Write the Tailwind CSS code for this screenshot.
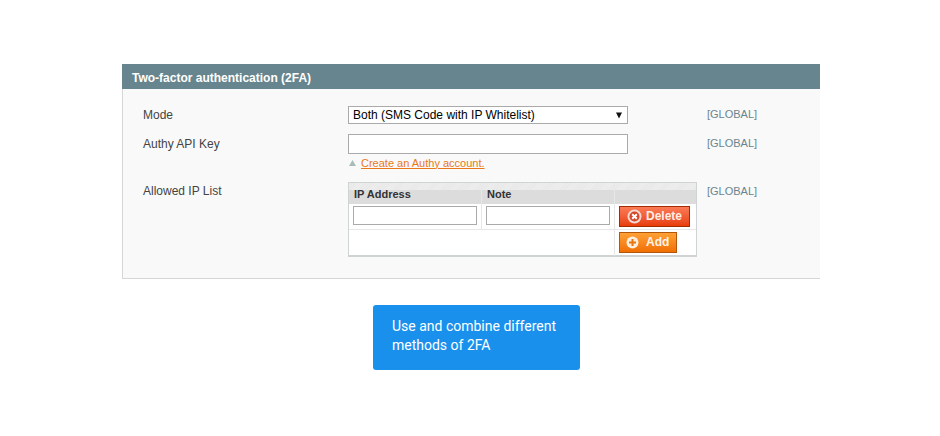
<!DOCTYPE html>
<html lang="en">

<head>
    <meta charset="UTF-8">
    <meta name="viewport" content="width=device-width, initial-scale=1.0">
    <title>Two-factor authentication</title>
    <script src="https://cdn.jsdelivr.net/npm/@tailwindcss/browser@4"></script>
</head>

<body class="bg-white w-[940px] h-[436px] overflow-hidden font-['Liberation_Sans',Arial,sans-serif] text-[12px] text-[#444]">
    <div class="pt-[64px] pl-[122px] w-[820px]">
        <div class="h-[25px] bg-[#67858e] text-white font-bold text-[12px] leading-[28px] pl-[10px]">Two-factor authentication (2FA)</div>
        <div class="h-[190px] bg-[#f9f9f9] border-l border-b border-[#d6d6d6] pt-[17px] pl-[20px] box-border">
            <div class="flex h-[18px]">
                <div class="w-[205px] leading-[18px]">Mode</div>
                <div class="w-[280px] h-[18px] bg-white border border-[#aaa] box-border flex items-center justify-between pl-[4px] pr-[5px] text-black">
                    <span>Both (SMS Code with IP Whitelist)</span>
                    <svg width="6" height="7" viewBox="0 0 6 7"><path d="M0 0.5h6L3 6.5z" fill="#111"/></svg>
                </div>
                <div class="ml-[79px] text-[11px] text-[#6a858e] leading-[17px]">[GLOBAL]</div>
            </div>
            <div class="flex mt-[10px] h-[20px]">
                <div class="w-[205px] leading-[20px]">Authy API Key</div>
                <div class="w-[280px] h-[20px] bg-white border border-[#aaa] box-border"></div>
                <div class="ml-[79px] text-[11px] text-[#6a858e] leading-[18px]">[GLOBAL]</div>
            </div>
            <div class="flex ml-[205px] h-[18px] items-center text-[11px]">
                <svg class="ml-[1px] mr-[5px]" width="7" height="6" viewBox="0 0 7 6"><path d="M3.5 0L7 6H0z" fill="#a9bbb8"/></svg>
                <a href="#" class="text-[#e8781a] underline">Create an Authy account.</a>
            </div>
            <div class="flex mt-[10px]">
                <div class="w-[205px] leading-[18px]">Allowed IP List</div>
                <div class="w-[349px] h-[75px] bg-white border border-[#d0d3d3] border-b-2 box-border grid grid-cols-[133px_133px_81px] grid-rows-[21px_26px_26px]">
                    <div class="border-r border-[#e6e8e8] flex flex-col font-bold text-[11px] text-[#333]">
                        <div class="h-[7px] bg-[repeating-linear-gradient(135deg,#e8e8e8_0,#e8e8e8_1px,#eeeeee_1px,#eeeeee_2px)]"></div>
                        <div class="h-[14px] bg-[#dcdcdc] pl-[5px] leading-[9px]">IP Address</div>
                    </div>
                    <div class="border-r border-[#e6e8e8] flex flex-col font-bold text-[11px] text-[#333]">
                        <div class="h-[7px] bg-[repeating-linear-gradient(135deg,#e8e8e8_0,#e8e8e8_1px,#eeeeee_1px,#eeeeee_2px)]"></div>
                        <div class="h-[14px] bg-[#dcdcdc] pl-[5px] leading-[9px]">Note</div>
                    </div>
                    <div class="flex flex-col">
                        <div class="h-[7px] bg-[repeating-linear-gradient(135deg,#e8e8e8_0,#e8e8e8_1px,#eeeeee_1px,#eeeeee_2px)]"></div>
                        <div class="h-[14px] bg-[#dcdcdc]"></div>
                    </div>
                    <div class="border-r border-b border-[#e6e8e8] pl-[4px] pt-[2px]">
                        <div class="w-[124px] h-[19px] border border-[#aaa] bg-white box-border"></div>
                    </div>
                    <div class="border-r border-b border-[#e6e8e8] pl-[4px] pt-[2px]">
                        <div class="w-[124px] h-[19px] border border-[#aaa] bg-white box-border"></div>
                    </div>
                    <div class="border-b border-[#e6e8e8] pl-[4px] pt-[2px]">
                        <button class="w-[71px] h-[21px] border border-[#a32c05] bg-linear-to-b from-[#fb7a55] to-[#e83c05] text-[#fdeee6] font-bold text-[12px] flex items-center pl-[7px] gap-[4px]">
                            <svg width="15" height="15" viewBox="0 0 15 15"><circle cx="7.5" cy="7.5" r="7" fill="#f3d9cf"/><circle cx="7.5" cy="7.5" r="5" fill="#d5472a"/><path d="M5.2 5.2l4.6 4.6M9.8 5.2l-4.6 4.6" stroke="#fff" stroke-width="2"/></svg>
                            <span class="mb-[2px]">Delete</span>
                        </button>
                    </div>
                    <div class="col-span-2 border-r border-[#e6e8e8]"></div>
                    <div class="pl-[4px] pt-[2px]">
                        <button class="w-[58px] h-[21px] border border-[#b2560b] bg-linear-to-b from-[#ffa033] to-[#f06f00] text-[#fff4e6] font-bold text-[12px] flex items-center pl-[6px] gap-[7px]">
                            <svg width="13" height="13" viewBox="0 0 13 13"><circle cx="6.5" cy="6.5" r="6" fill="#fdeedd"/><path d="M6.5 3v7M3 6.5h7" stroke="#e8760c" stroke-width="2"/></svg>
                            <span class="mb-[2px]">Add</span>
                        </button>
                    </div>
                </div>
                <div class="ml-[10px] text-[11px] text-[#6a858e] leading-[18px]">[GLOBAL]</div>
            </div>
        </div>
    </div>
    <div class="mt-[26px] ml-[373px] w-[207px] h-[65px] rounded-[3px] bg-[#1a90ed] text-white font-['Roboto',sans-serif] text-[14px] leading-[19px] pl-[19px] pt-[12px]">Use and combine different<br>methods of 2FA</div>
</body>

</html>
